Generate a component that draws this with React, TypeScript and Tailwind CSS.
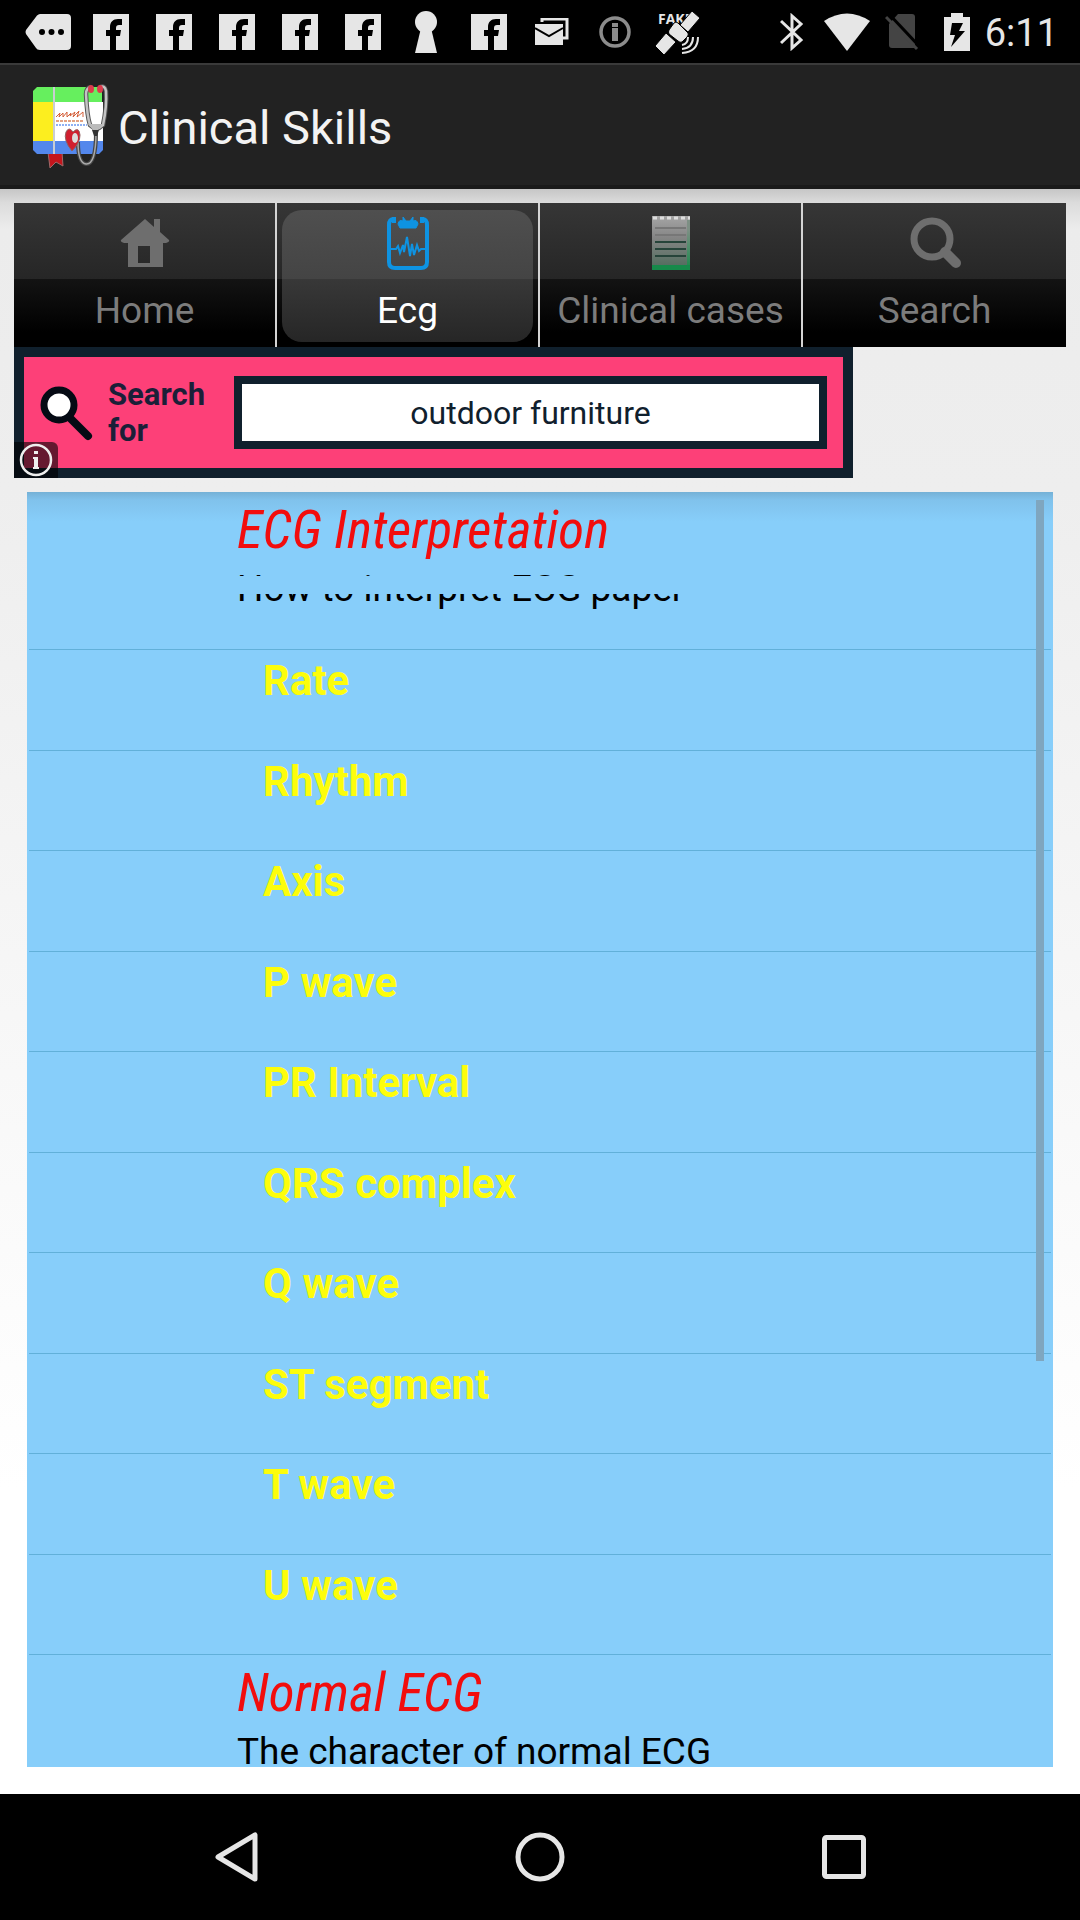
import React from "react";

const lessons = [
  "Rate",
  "Rhythm",
  "Axis",
  "P wave",
  "PR Interval",
  "QRS complex",
  "Q wave",
  "ST segment",
  "T wave",
  "U wave",
];

function Slot({ children }: { children: React.ReactNode }) {
  return <span className="flex w-[63px] justify-center">{children}</span>;
}

function FacebookIcon() {
  return (
    <svg width="36" height="36" viewBox="0 0 36 36">
      <rect width="36" height="36" fill="#e6e6e6" />
      <path
        d="M17 36V22H13V16H17V13C17 8 20 5 25 5H29V11H26C24 11 23 12 23 14V16H28L27 22H23V36Z"
        fill="#000"
      />
    </svg>
  );
}

function StatusBar() {
  return (
    <div className="flex h-[63px] items-center justify-between bg-black pl-4 pr-[22px]">
      <div className="flex items-center">
        <Slot>
          <svg width="46" height="36" viewBox="0 0 46 36">
            <path d="M12 1.5Q13.500 0 15 0H42Q46 0 46 4V32Q46 36 42 36H15Q12 36 11 34L1 20Q0 18 1 16Z" fill="#e6e6e6" />
            <circle cx="17" cy="18" r="3" />
            <circle cx="26.500" cy="18" r="3" />
            <circle cx="36" cy="18" r="3" />
          </svg>
        </Slot>
        {[0, 1, 2, 3, 4].map((n) => (
          <Slot key={n}>
            <FacebookIcon />
          </Slot>
        ))}
        <Slot>
          <svg width="24" height="44" viewBox="0 0 24 44" fill="#e6e6e6">
            <circle cx="12" cy="12" r="11" />
            <path d="M7 18H17L23 43H1Z" />
          </svg>
        </Slot>
        <Slot>
          <FacebookIcon />
        </Slot>
        <Slot>
          <svg width="34" height="28" viewBox="0 0 34 28">
            <path d="M7 4V1H32V20H28" fill="none" stroke="#e6e6e6" strokeWidth="3" />
            <rect x="0" y="6" width="28" height="21" fill="#e6e6e6" />
            <path d="M0 10L14 18L28 10" fill="none" stroke="#000" strokeWidth="2" />
          </svg>
        </Slot>
        <Slot>
          <svg width="32" height="32" viewBox="0 0 32 32" fill="#8c8c8c">
            <circle cx="16" cy="16" r="14" fill="none" stroke="#8c8c8c" strokeWidth="3.500" />
            <rect x="13" y="7" width="6" height="4" />
            <rect x="13" y="12" width="6" height="13" />
          </svg>
        </Slot>
        <Slot>
          <svg width="44" height="44" viewBox="0 0 44 44" className="overflow-visible">
            <text x="2" y="14" fill="#e6e6e6" fontFamily="Open Sans, sans-serif" fontWeight="700" fontSize="14">
              FAKE
            </text>
            <g stroke="#000" fill="#e6e6e6">
              <path d="M24 15L36 1L44 8L32 22Z" />
              <path d="M-1 36L10 23L20 32L8 45Z" />
              <path d="M13 20L18 13Q20 11 22 13L32 23Q33 25 31 27L26 32Q24 33 22 31L13 24Q12 22 13 20Z" />
            </g>
            <g fill="none" stroke="#e6e6e6" strokeWidth="2">
              <path d="M26 35Q32 34 32 27" />
              <path d="M26 39Q37 38 37 27" />
              <path d="M26 43Q42 42 42 27" />
            </g>
          </svg>
        </Slot>
      </div>
      <div className="flex items-center">
        <span className="flex w-[55px] justify-center">
          <svg width="24" height="38" viewBox="0 0 24 38" fill="none" stroke="#e6e6e6" strokeWidth="3">
            <path d="M1 8L21 27L12 35V3L21 11L1 30" />
          </svg>
        </span>
        <span className="flex w-[55px] justify-center">
          <svg width="46" height="38" viewBox="0 0 46 38">
            <path d="M0 8Q23 -7 46 8L23 38Z" fill="#e6e6e6" />
          </svg>
        </span>
        <span className="flex w-[55px] justify-center">
          <svg width="34" height="38" viewBox="0 0 34 38">
            <path d="M13 1H27Q30 1 30 4V35H7Q4 35 4 32V11Z" fill="#444" />
            <path d="M3 0L34 33" stroke="#000" strokeWidth="3" />
            <path d="M1 4L32 36" stroke="#444" strokeWidth="3" />
          </svg>
        </span>
        <span className="flex w-[55px] justify-center">
          <svg width="26" height="38" viewBox="0 0 26 38">
            <path d="M7 0H19V4H26V38H0V4H7Z" fill="#e6e6e6" />
            <path d="M8 10H19L15 18H21L7 34L11 22H6Z" fill="#000" />
          </svg>
        </span>
        <span className="mt-0.5 text-[38px] leading-[44px] text-[#e6e6e6]">6:11</span>
      </div>
    </div>
  );
}

function AppIcon() {
  return (
    <svg width="98" height="110" viewBox="0 0 98 110" className="shrink-0">
      <path d="M28 82H42L43 96L36 92L30 98Z" fill="#c4151c" stroke="#a06a6a" />
      <path d="M17 17H82V32H13V21Z" fill="#66ef5e" />
      <rect x="13" y="32" width="70" height="39" fill="#fff" />
      <rect x="13" y="32" width="20" height="39" fill="#fcee1f" />
      <path d="M13 71H83V80L79 84H17L13 80Z" fill="#5387ec" />
      <rect x="33" y="17" width="2" height="67" fill="#c9cdd3" />
      <path
        d="M36 47L40 43L39 47L43 43L43 47L47 42L47 47L51 43L50 46L55 42L53 47L59 41L57 47L63 42L63 47"
        fill="none"
        stroke="#d4603a"
      />
      <path d="M36 51H63" stroke="#e3a384" strokeWidth="2" strokeDasharray="3 1" />
      <path d="M36 55H67" stroke="#8fb0f2" strokeWidth="2" strokeDasharray="2 1" />
      <path
        d="M71 17Q66 18 66 24Q67 46 70 55L74 58H79L83 55Q87 36 86 21Q85 15 80 17"
        fill="none"
        stroke="#555"
        strokeWidth="4.500"
      />
      <path
        d="M71 17Q66 18 66 24Q67 46 70 55L74 58H79L83 55Q87 36 86 21Q85 15 80 17"
        fill="none"
        stroke="#c4c4c4"
        strokeWidth="2.500"
      />
      <ellipse cx="71" cy="19" rx="3" ry="4" fill="#dd3c4d" />
      <ellipse cx="80" cy="19" rx="3" ry="4" fill="#dd3c4d" />
      <path d="M68 54H83L78 60H73Z" fill="#bbb" />
      <path d="M76 62Q76 95 66 94Q58 93 58 72" fill="none" stroke="#444" strokeWidth="4" />
      <path d="M76 62Q76 95 66 94Q58 93 58 72" fill="none" stroke="#aaa" strokeWidth="1.500" />
      <path d="M72 60H79L77 66H74Z" fill="#333" />
      <path d="M52 81Q43 70 46 62Q49 56 53 62Q59 56 60 65Q60 73 52 81Z" fill="#d01f2f" stroke="#8e6262" />
      <ellipse cx="55" cy="68" rx="3" ry="5" fill="#dcdcdc" />
    </svg>
  );
}

function HomeIcon() {
  return (
    <svg width="50" height="50" viewBox="0 0 50 50">
      <path
        d="M25 1L34 9V1H40V14L49 22Q50 24 46 25H43V49H8V25H4Q0 24 1 22Z M18 28V45H30V28Z"
        fill="#6e6e6e"
        fillRule="evenodd"
      />
    </svg>
  );
}

function EcgIcon() {
  return (
    <svg width="44" height="54" viewBox="0 0 44 54" fill="none" stroke="#0e93e2">
      <path d="M8 3Q3 3 3 9V46Q3 52 9 52H35Q41 52 41 46V9Q41 3 36 3" strokeWidth="4" />
      <path d="M8 1V7M36 1V7" strokeWidth="4" />
      <path d="M12 8Q13 3 17 5V1L20 5H24L27 1V5Q31 3 32 8L30 12H14Z" fill="#0e93e2" strokeWidth="1" />
      <path d="M5 33H10L12 30L14 37L17 29L18 36L21 21L24 40L26 28L28 39L31 29L33 35L35 33H40" strokeWidth="2" />
    </svg>
  );
}

function CasesIcon() {
  return (
    <svg width="38" height="54" viewBox="0 0 38 54">
      <defs>
        <linearGradient id="page" x1="0" y1="0" x2="0" y2="1">
          <stop offset="0" stopColor="#a5a5a5" />
          <stop offset="0.400" stopColor="#858585" />
          <stop offset="1" stopColor="#4d6a5a" />
        </linearGradient>
        <linearGradient id="side" x1="0" y1="0" x2="0" y2="1">
          <stop offset="0.200" stopColor="#7d8f84" />
          <stop offset="1" stopColor="#168a4a" />
        </linearGradient>
      </defs>
      <rect width="38" height="54" fill="url(#page)" />
      <rect x="35" y="4" width="3" height="50" fill="url(#side)" />
      <rect y="49" width="38" height="5" fill="#168a4a" />
      <path d="M1 2H38" stroke="#ddd" strokeWidth="3" strokeDasharray="4 3" />
      <path d="M3 12H34M3 19H34" stroke="#777" strokeWidth="2" />
      <path d="M3 26H34M3 33H34M3 40H34" stroke="#26443a" strokeWidth="2" />
    </svg>
  );
}

function SearchIcon() {
  return (
    <svg width="52" height="54" viewBox="0 0 52 54" fill="none" stroke="#6e6e6e">
      <circle cx="23" cy="23" r="18" strokeWidth="7" />
      <path d="M36 36L47 47" strokeWidth="10" strokeLinecap="round" />
    </svg>
  );
}

const tabs = [
  { label: "Home", icon: <HomeIcon /> },
  { label: "Ecg", icon: <EcgIcon /> },
  { label: "Clinical cases", icon: <CasesIcon /> },
  { label: "Search", icon: <SearchIcon /> },
];

function Tabs() {
  return (
    <nav className="grid h-36 grid-cols-4 divide-x-2 divide-[#d4d4d4] bg-[linear-gradient(#363636_0%,#262626_53%,#131313_53%,#000_90%)]">
      {tabs.map((tab) =>
        tab.label === "Ecg" ? (
          <button key={tab.label} type="button" aria-current="page" className="flex px-[5px] pb-[5px] pt-[7px]">
            <span className="flex flex-1 flex-col items-center gap-[19px] self-stretch rounded-[20px] bg-[linear-gradient(#4f4f4f_0%,#444_52%,#383838_52%,#262626_100%)] pt-[6px]">
              {tab.icon}
              <span className="text-[37px] leading-[44px] text-white">{tab.label}</span>
            </span>
          </button>
        ) : (
          <button key={tab.label} type="button" className="flex flex-col items-center gap-[19px] pt-[13px]">
            <span className="flex h-[54px] items-center">{tab.icon}</span>
            <span className="whitespace-nowrap text-[37px] leading-[44px] text-[#7c7c7c]">{tab.label}</span>
          </button>
        )
      )}
    </nav>
  );
}

function AdBanner() {
  return (
    <form
      onSubmit={(e) => e.preventDefault()}
      className="relative flex h-[131px] w-4/5 max-w-[839px] items-center border-10 border-[#10202d] bg-[#fd4078] pl-4 pr-4"
    >
      <svg width="54" height="56" viewBox="0 0 54 56" className="mr-[14px] shrink-0">
        <path d="M31 34L48 51" stroke="#050a14" strokeWidth="8" strokeLinecap="round" />
        <circle cx="19" cy="20" r="15" fill="#fff" stroke="#050a14" strokeWidth="7" />
      </svg>
      <label htmlFor="ad-query" className="w-[126px] shrink-0 text-[31px] font-bold leading-9 text-[#1b1f38]">
        Search for
      </label>
      <input
        id="ad-query"
        type="text"
        defaultValue="outdoor furniture"
        className="h-[73px] min-w-0 flex-1 border-8 border-[#10202d] bg-white text-center text-[32px] text-[#10202d] outline-none"
      />
      <button
        type="button"
        aria-label="About this ad"
        className="absolute -bottom-2.5 -left-2.5 flex h-9 w-11 items-center justify-center rounded-tr-md bg-black/60"
      >
        <svg width="34" height="34" viewBox="0 0 34 34" fill="#eee">
          <circle cx="17" cy="17" r="15" fill="none" stroke="#eee" strokeWidth="2.500" />
          <rect x="15" y="8" width="4" height="3" />
          <path d="M14 14H19V24H20V26H14V24H15V16H14Z" />
        </svg>
      </button>
    </form>
  );
}

function TopicHeading({ children }: { children: React.ReactNode }) {
  return (
    <h2 className="font-['Roboto_Condensed','Roboto',sans-serif] text-[53px] italic leading-[60px] text-[#f20d0d]">
      {children}
    </h2>
  );
}

function Topics() {
  return (
    <div className="relative mx-[13px] mt-[14px] overflow-hidden bg-[#87cefa] bg-[linear-gradient(#75b1d6_0px,#80c2ec_8px,#87cefa_30px)]">
      <section className="mx-[2px] h-[158px] border-b border-[#61b0d9] pl-[208px] pt-2">
        <TopicHeading>ECG Interpretation</TopicHeading>
        <p className="relative mt-[13px] text-[37px] leading-8 text-black">
          How to interpret ECG paper
          <span className="absolute inset-x-0 top-[3px] h-[18px] bg-[#87cefa]" />
        </p>
      </section>
      <ul className="mx-[2px] grid h-[1005px] auto-rows-fr">
        {lessons.map((name) => (
          <li key={name} className="border-b border-[#61b0d9]">
            <button
              type="button"
              className="flex h-full w-full items-start pl-[234px] pt-[6px] text-left text-[42px] font-bold leading-[50px] text-[#fdfd0b]"
            >
              {name}
            </button>
          </li>
        ))}
      </ul>
      <section className="mx-[2px] h-[112px] pl-[208px] pt-2">
        <TopicHeading>Normal ECG</TopicHeading>
        <p className="mt-[13px] text-[37px] leading-8 text-black">The character of normal ECG</p>
      </section>
      <span className="absolute right-[9px] top-2 h-[861px] w-2 bg-[#7fa6bf]" />
    </div>
  );
}

function NavBar() {
  const button = "flex items-center justify-center";
  return (
    <div className="grid h-[126px] grid-cols-3 bg-black px-[84px]">
      <button type="button" aria-label="Back" className={button}>
        <svg width="46" height="52" viewBox="0 0 46 52">
          <path d="M42 4V48L5 26Z" fill="none" stroke="#e6e6e6" strokeWidth="5" strokeLinejoin="round" />
        </svg>
      </button>
      <button type="button" aria-label="Home screen" className={button}>
        <svg width="52" height="52" viewBox="0 0 52 52">
          <circle cx="26" cy="26" r="22" fill="none" stroke="#e6e6e6" strokeWidth="5" />
        </svg>
      </button>
      <button type="button" aria-label="Recent apps" className={button}>
        <svg width="44" height="44" viewBox="0 0 44 44">
          <rect x="2.500" y="2.500" width="39" height="39" rx="2" fill="none" stroke="#e6e6e6" strokeWidth="5" />
        </svg>
      </button>
    </div>
  );
}

export default function App() {
  return (
    <div className="flex min-h-screen flex-col bg-white font-['Roboto',sans-serif]">
      <StatusBar />
      <header className="flex h-[126px] items-center border-b-4 border-t-2 border-b-[#1a1a1a] border-t-[#3a3a3a] bg-[#222] pl-5">
        <AppIcon />
        <h1 className="pt-1.5 text-[47px] leading-[56px] text-[#f3f3f3]">Clinical Skills</h1>
      </header>
      <main className="flex-1 bg-[linear-gradient(#c6c6c6_0px,#dcdcdc_14px,#ececec_40px,#eee_300px,#fafafa_1000px,#fff_1300px)] px-[14px] pb-[27px] pt-[14px]">
        <Tabs />
        <AdBanner />
        <Topics />
      </main>
      <NavBar />
    </div>
  );
}
